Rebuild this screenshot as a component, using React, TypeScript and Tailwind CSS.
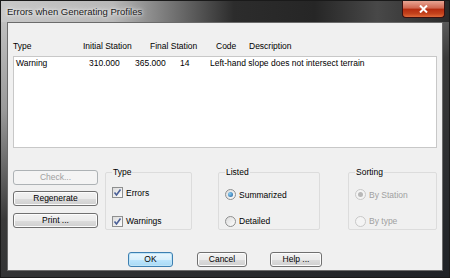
import React from "react";

const font = "font-['Liberation_Sans',Arial,sans-serif]";

function Btn({ label, disabled, def, w }: { label: string; disabled?: boolean; def?: boolean; w: string }) {
  return (
    <div
      className={`${w} h-[15px] flex items-center justify-center rounded-[3px] border text-[8.5px] leading-none ${
        def
          ? "border-[#3c7fb1] shadow-[inset_0_0_0_1px_#bfe4f7] bg-[linear-gradient(#eaf6fd_0%,#d9f0fc_50%,#bee6fd_51%,#a7d9f5_100%)]"
          : disabled
          ? "border-[#adb2b5] bg-[#f4f4f4]"
          : "border-[#707070] shadow-[inset_0_0_0_1px_#fcfcfc] bg-[linear-gradient(#f2f2f2_0%,#ebebeb_50%,#dddddd_51%,#cfcfcf_100%)]"
      } ${disabled ? "text-[#a0a0a0]" : "text-black"}`}
    >
      {label}
    </div>
  );
}

function Check({ label }: { label: string }) {
  return (
    <div className="flex items-center gap-[3px]">
      <div className="w-[11px] h-[11px] border border-[#8e8f8f] bg-[linear-gradient(135deg,#dcdcdc,#fdfdfd)] flex items-center justify-center">
        <svg width="9" height="9" viewBox="0 0 9 9">
          <path d="M1.5 4.5 L3.5 7 L7.5 1.5" stroke="#4a5f97" strokeWidth="1.6" fill="none" />
        </svg>
      </div>
      <span className="text-[8.5px] text-black">{label}</span>
    </div>
  );
}

function Radio({ label, on, disabled }: { label: string; on?: boolean; disabled?: boolean }) {
  return (
    <div className="flex items-center gap-[3px]">
      <div
        className={`w-[11px] h-[11px] rounded-full border ${
          disabled ? "border-[#c8c8c8] bg-[#f4f4f4]" : "border-[#8e8f8f] bg-[linear-gradient(135deg,#dcdcdc,#fdfdfd)]"
        } flex items-center justify-center`}
      >
        {on && (
          <div
            className={`w-[5px] h-[5px] rounded-full ${
              disabled ? "bg-[#b8b8b8]" : "bg-[radial-gradient(circle_at_35%_35%,#8ad1f5,#1c5a9b)]"
            }`}
          />
        )}
      </div>
      <span className={`text-[8.5px] ${disabled ? "text-[#a0a0a0]" : "text-black"}`}>{label}</span>
    </div>
  );
}

function Group({ title, w, h, children }: { title: string; w: string; h: string; children: React.ReactNode }) {
  return (
    <fieldset className={`${w} ${h} border border-[#dcdcdc] rounded-[2px] px-[6px] pt-0 m-0`}>
      <legend className="text-[8.5px] px-[1px] leading-none text-black">{title}</legend>
      {children}
    </fieldset>
  );
}

export default function App() {
  return (
    <div
      className={`${font} w-[450px] h-[278px] flex flex-col border border-[#1a1a1a] bg-[linear-gradient(160deg,#c9c9c9_0%,#9a9a9a_25%,#3a3a3a_50%,#1f2226_100%)] overflow-hidden`}
    >
      {/* title bar */}
      <div className="h-[21px] flex items-start justify-between bg-[linear-gradient(to_right,#c8c8c8_0%,#b8b8b8_25%,#6a6a6a_40%,#2c2c2c_52%,#262626_70%,#484848_84%,#2a2a2a_100%)]">
        <div className="pl-[6px] pt-[4px] text-[9.5px] text-[#1a1a1a] [text-shadow:0_0_6px_#ffffff,0_0_3px_#ffffff]">
          Errors when Generating Profiles
        </div>
        <div className="mr-[4px] w-[43px] h-[17px] rounded-b-[4px] border border-t-0 border-[#3a1010] bg-[linear-gradient(#e8a493_0%,#d0664f_45%,#b52b0f_50%,#c4431d_80%,#e06a3a_100%)] flex items-center justify-center">
          <svg width="9" height="8" viewBox="0 0 9 8">
            <path d="M1 0.5 L8 7.5 M8 0.5 L1 7.5" stroke="#ffffff" strokeWidth="2" />
          </svg>
        </div>
      </div>

      {/* client */}
      <div className="flex-1 mx-[6px] mb-[6px] border border-[#6b6b6b] bg-[#f0f0f0] flex flex-col">
        {/* headers */}
        <div className="mt-[18px] ml-[5px] flex text-[8.5px] text-black leading-[10px]">
          <span className="w-[70px]">Type</span>
          <span className="w-[67px]">Initial Station</span>
          <span className="w-[66px]">Final Station</span>
          <span className="w-[33px]">Code</span>
          <span>Description</span>
        </div>
        {/* list */}
        <div className="mt-[5px] mx-[5px] h-[92px] border border-[#c8c8c8] bg-white">
          <div className="flex text-[8.5px] text-black leading-[10px] pt-[1px]">
            <span className="w-[75px] pl-[2px]">Warning</span>
            <span className="w-[46px]">310.000</span>
            <span className="w-[45px]">365.000</span>
            <span className="w-[30px]">14</span>
            <span>Left-hand slope does not intersect terrain</span>
          </div>
        </div>

        {/* controls */}
        <div className="mt-[20px] ml-[5px] flex items-start">
          <div className="w-[85px] flex flex-col pt-[2px]">
            <Btn label="Check..." disabled w="w-[85px]" />
            <div className="h-[6px]" />
            <Btn label="Regenerate" w="w-[85px]" />
            <div className="h-[7px]" />
            <Btn label="Print ..." w="w-[85px]" />
          </div>
          <div className="ml-[7px]">
            <Group title="Type" w="w-[87px]" h="h-[62px]">
              <div className="flex flex-col pt-[10px]">
                <Check label="Errors" />
                <div className="h-[16px]" />
                <Check label="Warnings" />
              </div>
            </Group>
          </div>
          <div className="ml-[26px]">
            <Group title="Listed" w="w-[102px]" h="h-[62px]">
              <div className="flex flex-col pt-[12px]">
                <Radio label="Summarized" on />
                <div className="h-[14px]" />
                <Radio label="Detailed" />
              </div>
            </Group>
          </div>
          <div className="ml-[28px]">
            <Group title="Sorting" w="w-[89px]" h="h-[62px]">
              <div className="flex flex-col pt-[12px]">
                <Radio label="By Station" on disabled />
                <div className="h-[14px]" />
                <Radio label="By type" disabled />
              </div>
            </Group>
          </div>
        </div>

        {/* bottom buttons */}
        <div className="mt-[22px] flex">
          <div className="ml-[120px]">
            <Btn label="OK" def w="w-[45px]" />
          </div>
          <div className="ml-[24px]">
            <Btn label="Cancel" w="w-[50px]" />
          </div>
          <div className="ml-[23px]">
            <Btn label="Help ..." w="w-[52px]" />
          </div>
        </div>
      </div>
    </div>
  );
}
